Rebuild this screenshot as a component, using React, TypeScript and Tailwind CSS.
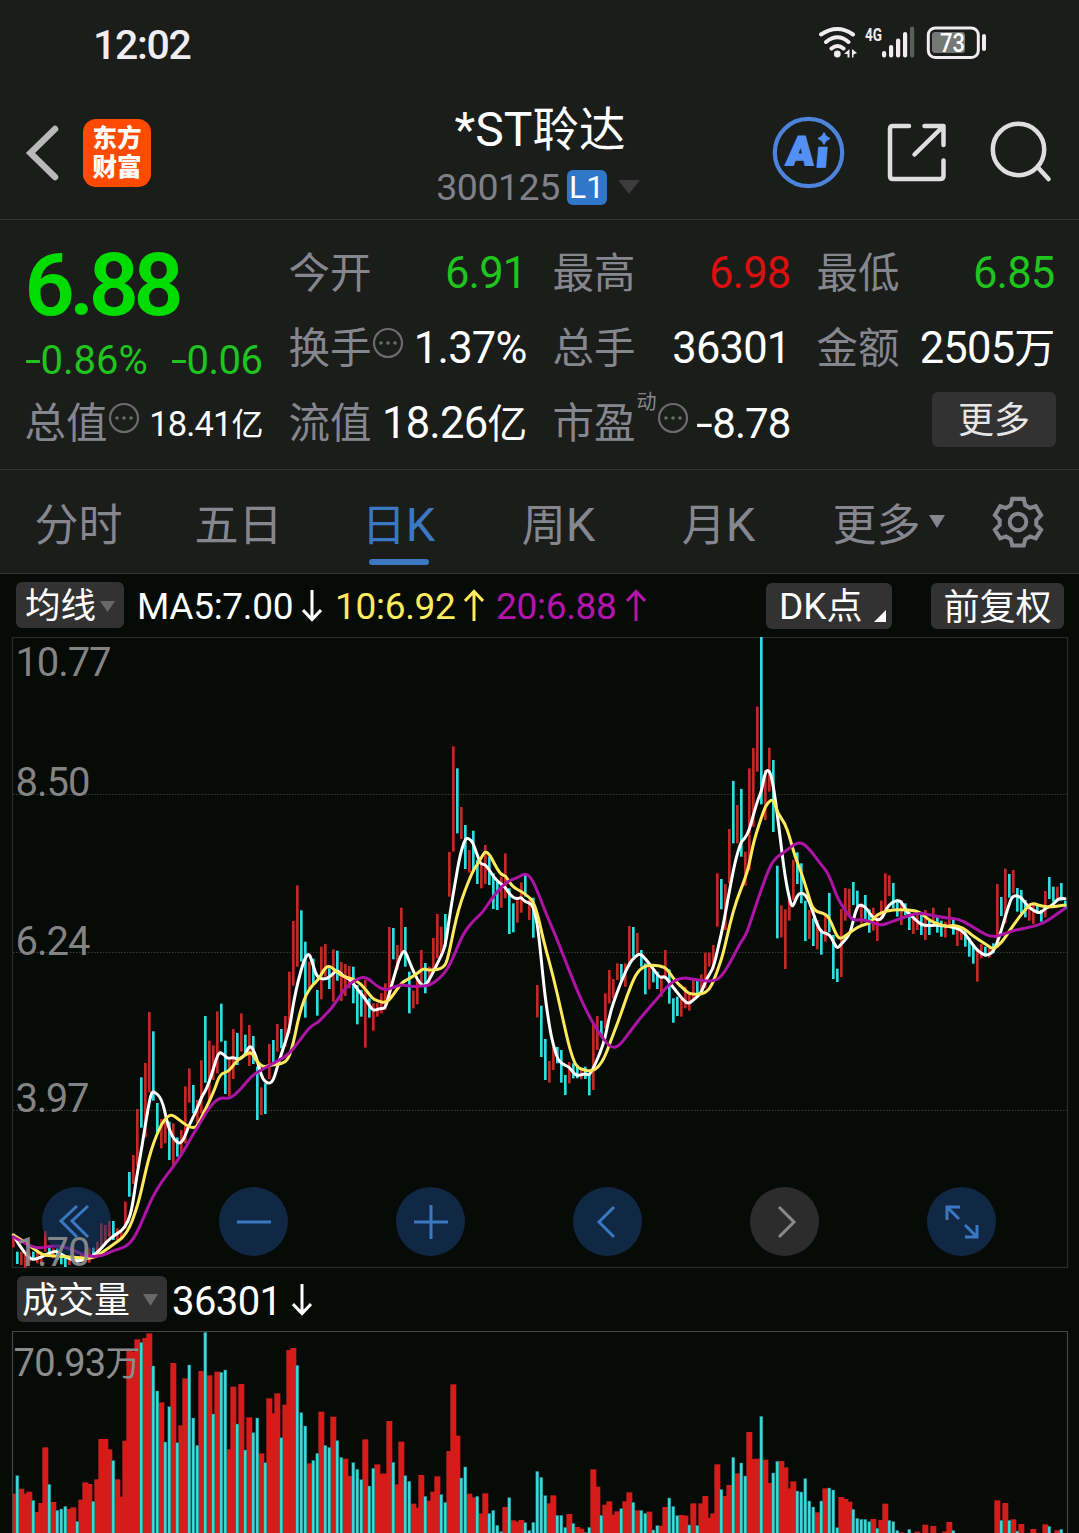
import type { ReactNode } from 'react'
import clsx from 'clsx'

// Chart space is 3 units per pixel, one bar every 12 units
const STEP = 12
const FIRST = 40

// [direction, high, low] per day, split where the vertical origin changes
const CANDLES: Array<{ dy: number; rows: string }> = [
  {
    dy: 669,
    rows: `r1125-1162 c1175-1212 r1175-1215 r1185-1223 r1175-1205 c1175-1200 r1170-1210 r1175-1212 r1113-1175 c1155-1185
    r1165-1195 c1165-1200 c1180-1213 c1190-1221 r1190-1215 r1185-1205 c1190-1210 r1180-1205 r1170-1200 r1165-1208
    c1163-1192 r1145-1185 r1090-1160 r1095-1155 r1083-1130 c1083-1140 r1105-1140 r1115-1140 r1025-1105 c936-1010
    r885-972 r747-920 c652-803 r609-833 r456-697 c514-722 c729-822 r777-865 r780-850 c785-900
    r790-920 c832-890 r810-885 r679-850 r625-728 c675-760 r720-790 r601-760 c468-668 r542-720
    r556-660 r454-640 c431-545 c542-702 r600-708 r507-657 c519-615 r460-575 c524-580 r495-618
    c528-612 c620-780 r682-765 c670-762 r552-657 c540-607 r492-575 c507-565 r468-560 r335-520
    r183-377 r76-320 c151-305 c245-473 r305-390 c296-372 c390-467 r260-418 r252-350 c325-387
    r268-425 c272-362 r306-423 r312-408 r318-385 c320-430 c375-493`,
  },
  {
    dy: 249,
    rows: `c810-890 r780-983 c835-893 r850-932 r850-890 r820-880 r790-870 r621-830 c624-718 r675-750
    r563-700 c621-740 c755-880 r812-865 r780-853 r690-800 c729-820 r740-790 r654-760 r582-715
    r620-710 c582-680 r396-530 r79-395 c145-340 r261-357 c315-447 r390-458 c332-455 c420-492
    r430-505 r375-492 c410-495 c460-567 c480-570 r470-563 r400-535 c505-642 c550-637 r530-608
    r487-578 c460-530 r540-600 c533-653 r795-892 c857-1011 c957-1080 r1023-1088 r980-1050 c981-1030
    c990-1088 c1065-1125 r1026-1090 c1030-1075 c1035-1075 r1045-1078 c1040-1077 c1065-1126 r910-1110 r888-990
    c902-950 r820-925 r750-850 r777-835 r730-780 c732-785 r730-800 r618-740 c621-710 r639-700
    c690-740 c730-823 r740-808 c750-787 c755-807 r765-830 r690-770 c748-851 c835-908 c830-888
    r835-890 r800-865 r820-872`,
  },
  {
    dy: -21,
    rows: `r1045-1110 c1052-1100 r1033-1095 r968-1075 r968-1010 r945-1020 r730-890 c747-838 r762-900 r597-760
    c453-640 r525-640 c477-680 r665-767 r415-720 r354-590 r230-425 c21-523 r420-570 r353-485
    c390-606 c707-925 r826-922 r838-1017 r810-872 r690-810 c667-762 c700-820 c812-933 r840-927
    c865-948 r870-958 c905-974 r855-935 c789-907 c915-1047 c1016-1056 r837-1041 r774-872 r776-860
    c756-825 c782-830 r820-880 c795-872 c838-908 r833-902 r850-933 r812-860 r730-840 r736-798
    c759-835 c808-860 r810-885 c820-855 c845-900 r865-912 r850-900 c855-915 r840-930 c870-915
    r833-885 c860-908 c872-920 r875-923 r833-890 c870-914 r885-948 r890-930 c900-950 c925-980
    c945-1001 r960-1055 r942-985 c950-980 r955-983 c940-970 r762-950 c801-858 r716-880 c732-803
    r720-790 c774-845 c780-850 c810-862 r820-872 r820-882 c825-850 c840-875 r783-862 c741-807
    c770-815 r770-810 c759-812 c812-838`,
  },
]

// top of each volume bar, "-" is a day below the visible part
const VOLUMES: Array<{ dy: number; rows: string }> = [
  {
    dy: -183,
    rows: `r671 c617 r656 r671 r665 c691 r726 r699 r532 c643 r696 c721 c717 c709 r717 r712 c754 r689 r637 r642
    c694 r628 r507 r507 r538 c572 r628 r680 r512 r240 r245 r208 c217 r204 r190 c288 c363 r397 c516 c410
    r279 c518 r466 r325 c285 c444 c526 r303 c187 r316 c432 r305 c307 c300 r538 r350 c462 r342 c540 r442
    c488 c444 r550 c578 r385 r430 r370 c503 r404 r240 r234 c286 c428 c468 r580 c571 c550 r425 c526 c532
    r440 c512 c562 r566 r618 c578 c598`,
  },
  {
    dy: 117,
    rows: `c329 r208 c348 c295 r283 r311 r311 r153 c277 r343 r215 c317 c334 r401 r413 r315 c379 r392 r365 r319
    c374 c397 r243 r43 r197 c324 c291 r371 r382 c379 r430 r370 c430 c421 c466 c485 r411 c383 r451 r455
    r450 c458 c482 c457 c304 c322 c377 r400 r376 c436 c436 c472 r432 c460 r471 r476 c487 c472 r298 r350
    c436 r404 r394 r434 r424 c416 r394 r367 c397 r421 c421 c430 r425 c480 c467 r467 r411 c384 c409 c437
    r435 r437 c465 r400 c466 r400 r378 r443 r430 r283 c358 r378 r345 c262 r310 c279 c318 r186 r267 r266
    c139 r269 r339 c309 c274 r273 r292 r355 r334 c363 c366 c326 c393 c411 r427 c393 r355 c354 c360 c473
    r381 r387 r395 c418 c445 c448 c448 c455 r447 c475 r450 r401 c451 c455 c481 r487 - c478 - r485
    - r464 - r468 - - r484 r456 c481 - - - - - - - - - - r391
    c451 r399 c451 r448 c483 r462 - - r477 - - r463 c469 - r481 c478 -`,
  },
]

type Trace = Array<{ dx: number; dy: number; points: string }>

const MA5: Trace = [
  {
    dx: 0,
    dy: 669,
    points: `40,1125 60,1160 90,1197 108,1198 130,1188 150,1178 170,1173 190,1186 212,1198 236,1204 256,1196 275,1190 295,1175 320,1145
    345,1124 365,1113 385,1085 397,1040 410,950 425,865 440,770 452,705 460,692 485,715 500,780 510,815 525,842 540,852 553,835
    565,800 588,755 605,710 618,690 635,645 652,585 662,576 675,588 685,596 700,592 718,600 735,585 748,557 758,565 770,595
    785,650 795,665 808,671 820,662 832,620 848,570 868,510 880,430 895,360 912,300 926,278 935,300 948,345 962,358 985,355
    1012,328 1030,350 1052,358`,
  },
  {
    dx: 1020,
    dy: 249,
    points: `55,812 75,835 95,868 105,871 120,865 136,866 148,820 165,760 180,710 194,688 208,725 225,765 240,790 252,798 265,785
    280,755 300,715 316,680 330,580 345,490 360,405 375,357 385,354 398,366 410,400 422,433 435,433 448,450 460,470 480,490
    495,500 510,525 525,535 535,536 543,532 555,545 568,548 580,560 592,610 602,700 615,830 630,930 640,975 652,1015 665,1032
    688,1040 700,1060 715,1068 735,1060 748,1067 762,1040 780,1000 795,955 810,880 830,820 850,770 868,730 885,710 900,700
    915,715 935,740 960,775 975,768 990,790 1010,815 1030,840 1045,852 1060,840`,
  },
  {
    dx: 2070,
    dy: -21,
    points: `25,1097 35,1085 50,1045 70,1015 85,950 100,885 115,800 135,695 153,635 165,625 178,600 190,555 205,505 214,485 225,428
    235,418 245,440 258,520 270,620 285,740 300,815 308,833 320,800 330,788 345,792 358,815 370,850 382,885 395,908 418,912
    430,935 442,957 455,940 470,925 482,905 495,850 505,825 518,826 530,835 545,860 565,872 578,862 590,835 605,817 628,810
    640,825 652,848 670,862 685,878 705,888 740,885 778,890 805,895 825,910 845,940 865,965 890,978 910,965 925,930 940,880
    955,830 968,795 992,800 1010,825 1030,842 1052,850 1065,835 1085,828 1105,805 1125,806`,
  },
]

const MA10: Trace = [
  {
    dx: 0,
    dy: 669,
    points: `40,1125 65,1140 85,1155 105,1168 125,1184 150,1187 200,1190 240,1194 280,1195 310,1175 345,1150 370,1132 390,1100
    405,1060 420,1010 440,920 455,865 470,825 485,792 500,772 515,763 535,777 560,797 580,804 592,798 610,760 630,720 645,685
    660,642 685,635 700,615 715,598 735,585 755,575 770,605 790,622 810,615 845,612 865,598 880,550 892,490 905,440 920,400
    938,375 955,360 972,328 985,317 1000,325 1020,345 1045,353`,
  },
  {
    dx: 1020,
    dy: 249,
    points: `40,778 60,790 80,812 95,833 110,842 138,850 160,825 185,787 210,775 235,758 250,745 270,752 312,745 325,710 340,635
    355,570 375,510 400,450 415,430 428,405 437,394 450,405 465,435 482,463 498,468 510,490 525,505 545,515 565,530 580,545
    595,590 610,660 640,770 665,880 685,970 700,1020 712,1042 730,1050 755,1054 775,1042 795,1010 815,955 840,890 860,830
    880,780 895,752 912,740 935,734 975,741 990,760 1010,788 1030,805 1045,820`,
  },
  {
    dx: 2070,
    dy: -21,
    points: `10,1092 25,1093 45,1090 62,1072 80,1030 100,970 120,880 140,810 160,760 175,715 190,640 205,590 220,545 232,518 250,506
    262,548 285,580 300,625 315,680 335,730 355,795 370,843 410,852 425,880 440,918 452,927 470,915 490,900 515,885 540,880
    558,855 590,842 630,838 680,842 700,855 720,872 745,882 770,890 790,885 820,893 845,915 870,932 895,948 910,958 935,938
    960,900 985,865 1005,840 1025,818 1045,826 1075,832 1125,825`,
  },
]

const MA20: Trace = [
  {
    dx: 0,
    dy: 669,
    points: `40,1130 70,1148 115,1167 160,1156 200,1162 240,1180 270,1190 305,1188 340,1172 370,1163 390,1150 410,1120 430,1075
    455,1015 485,965 520,920 550,875 575,830 600,790 620,755 640,728 662,712 690,717 720,690 755,648 780,632 820,610 865,585
    900,540 930,500 955,487 970,470 995,445 1025,400 1045,375 1060,364`,
  },
  {
    dx: 1020,
    dy: 249,
    points: `60,773 75,772 90,780 110,798 135,811 160,802 185,793 215,800 260,798 280,790 318,757 345,700 370,640 400,602 428,578
    455,535 485,500 505,483 535,472 556,459 575,475 595,520 620,585 650,655 685,745 715,820 745,885 775,935 800,970 820,985
    840,975 870,935 900,895 935,855 965,820 985,795 1010,778 1035,773`,
  },
  {
    dx: 2070,
    dy: -21,
    points: `0,1046 20,1049 40,1052 70,1054 95,1040 125,990 150,940 168,915 190,850 220,760 248,690 285,665 310,645 325,638 342,642
    365,665 390,700 408,720 425,755 442,805 465,840 488,872 515,868 540,875 572,887 600,877 640,862 685,848 720,855 760,863
    805,866 840,885 870,905 905,922 940,913 975,900 1020,892 1060,880 1090,860 1125,835`,
  },
]

const candles = CANDLES.flatMap(({ dy, rows }) =>
  rows.trim().split(/\s+/).map(r => {
    const [high, low] = r.slice(1).split('-').map(Number)
    return { up: r[0] === 'r', high: high + dy, low: low + dy }
  }),
)

const volumes = VOLUMES.flatMap(({ dy, rows }) =>
  rows.trim().split(/\s+/).map(r => ({ up: r[0] === 'r', top: r === '-' ? 620 : Number(r.slice(1)) + dy })),
)

// rounds the corners by running quadratics through the midpoints
function toPath(trace: Trace) {
  const pts = trace.flatMap(({ dx, dy, points }) =>
    points.trim().split(/\s+/).map(p => {
      const [x, y] = p.split(',').map(Number)
      return [x + dx, y + dy]
    }),
  )
  let d = `M${pts[0][0]} ${pts[0][1]}`
  for (let i = 1; i < pts.length - 1; i++) {
    const mx = (pts[i][0] + pts[i + 1][0]) / 2
    const my = (pts[i][1] + pts[i + 1][1]) / 2
    d += `Q${pts[i][0]} ${pts[i][1]} ${mx} ${my}`
  }
  const last = pts[pts.length - 1]
  return `${d}L${last[0]} ${last[1]}`
}

const barX = (i: number) => FIRST + STEP * i

function StatusBar() {
  return (
    <div className="flex h-[88px] items-center pr-[91px] pl-[93px] text-[#f0ecf0]">
      <span className="mt-[2px] text-[41px] leading-none font-medium tracking-[-1.3px]">12:02</span>
      <svg className="-mt-[3px] ml-auto" width="170" height="36" viewBox="818 25 170 36" fill="none">
        <g stroke="#f0ecf0" strokeWidth="4" strokeLinecap="round">
          <path d="M821 34.5Q837.500 23.500 853 34.500M826 42Q837.500 32.500 848.500 42M831.500 48.500Q837.500 43.500 843.500 48.500" />
        </g>
        <circle cx="837.300" cy="54" r="3.400" fill="#f0ecf0" />
        <path d="M849.500 49v8.500h-2v-3.500h-3.500zM852 49v8.500h1.500v-3l3.500-1.500z" fill="#f0ecf0" />
        <text x="865" y="41" fontSize="19" fontWeight="700" fill="#f0ecf0" textLength="17" lengthAdjust="spacingAndGlyphs">4G</text>
        <g fill="#f0ecf0">
          <rect x="882" y="51" width="4.200" height="6.500" rx="2" />
          <rect x="889" y="45" width="4.200" height="12.500" rx="2" />
          <rect x="896" y="38.500" width="4.200" height="19" rx="2" />
          <rect x="903" y="32" width="4.200" height="25.500" rx="2" />
          <rect x="910" y="26.500" width="4.200" height="31" rx="2" fill="#5c5e5c" />
          <rect x="982" y="34" width="4" height="17" rx="2" />
        </g>
        <rect x="928.300" y="28" width="50" height="29.500" rx="7" stroke="#f0ecf0" strokeWidth="3" />
        <rect x="932" y="32" width="33" height="21" rx="3" fill="#767876" />
        <text x="940" y="51.500" fontSize="25" fontWeight="500" fill="#fff" textLength="25" lengthAdjust="spacingAndGlyphs">73</text>
      </svg>
    </div>
  )
}

function Header() {
  return (
    <header className="flex h-[132px] border-b border-[#343534] pr-[27px] pl-[24px]">
      <div className="flex w-[340px] items-center gap-[22px]">
        <svg className="-mt-[2px]" width="37" height="60" viewBox="0 0 37 60" fill="none" stroke="#b9b9b9" strokeWidth="6.500">
          <path d="M31 6L6.500 30L31 54" strokeLinecap="round" />
        </svg>
        <div className="-mt-[2px] flex h-[68px] w-[68px] flex-col items-center justify-center rounded-[13px] bg-[#ff4a00] text-[24.500px] leading-[29px] font-black text-white">
          <span>东方</span>
          <span>财富</span>
        </div>
      </div>
      <div className="flex w-[350px] flex-col items-center pt-[18px]">
        <h1 className="ml-[2px] text-[48px] leading-[48px] text-white">
          *ST<span className="text-[46.500px]">聆达</span>
        </h1>
        <div className="mt-[13px] -ml-[2px] flex items-center">
          <span className="text-[37.500px] leading-[40px] tracking-[-0.500px] text-[#7f8088]">300125</span>
          <span className="ml-[7px] flex h-[35px] w-[40px] items-center justify-center rounded-[6px] bg-[#3077c8] text-[32px] leading-none text-white">
            L1
          </span>
          <Caret className="ml-[11px] h-[14px] w-[22px] text-[#3c3c3c]" />
        </div>
      </div>
      <svg className="mt-[25px] ml-auto" width="282" height="76" viewBox="770 113 282 76" fill="none">
        <circle cx="808.500" cy="152.500" r="33.700" stroke="#4c84dc" strokeWidth="4.200" />
        <g fill="#5490f4" stroke="#5490f4" fontWeight="900" transform="translate(808 152) skewX(-5) translate(-808 -152)">
          <text x="787" y="165" fontSize="40" strokeWidth="2" textLength="27" lengthAdjust="spacingAndGlyphs">A</text>
          <text x="816" y="167" fontSize="37" strokeWidth="1.500" textLength="13" lengthAdjust="spacingAndGlyphs">ı</text>
        </g>
        <path d="M824 132.500Q825.500 137 830 138.500Q825.500 140 824 144.500Q822.500 140 818 138.500Q822.500 137 824 132.500Z" fill="#5490f4" stroke="#5490f4" />
        <g stroke="#dedede" strokeWidth="4.500" strokeLinecap="round" strokeLinejoin="round">
          <path d="M909 126H893Q890 126 890 129V176Q890 179 893 179H940Q943.500 179 943.500 176V160.500M924.500 126H943.500V145M943 126.500L914.500 154.500" />
          <circle cx="1018.500" cy="149.500" r="25.700" />
          <path d="M1038 167.500L1048.500 179" />
        </g>
      </svg>
    </header>
  )
}

function Caret({ className }: { className: string }) {
  return (
    <svg className={className} viewBox="0 0 16 12" preserveAspectRatio="none">
      <path d="M0 0H16L8 12Z" fill="currentColor" />
    </svg>
  )
}

function InfoDot() {
  return (
    <svg className="-mt-[8px] shrink-0" width="32" height="32" viewBox="0 0 32 32" fill="#6b6b6b">
      <circle cx="16" cy="16" r="14" fill="none" stroke="#6b6b6b" strokeWidth="2.200" />
      <circle cx="9" cy="16" r="1.800" />
      <circle cx="16" cy="16" r="1.800" />
      <circle cx="23" cy="16" r="1.800" />
    </svg>
  )
}

// wide minus sign used in front of negative numbers
function Minus() {
  return <span className="mr-[5px] inline-block origin-left scale-x-[1.450]">-</span>
}

type FieldProps = { label: string; extra?: ReactNode; children: ReactNode; color?: string; size?: string }

function Field({ label, extra, children, color = 'text-white', size = 'text-[43.500px] tracking-[-0.800px]' }: FieldProps) {
  return (
    <div className="flex h-[75px] items-center whitespace-nowrap">
      <span className="mt-[4px] text-[41.500px] leading-none text-[#86868e]">{label}</span>
      {extra}
      <span className={clsx('mt-[5px] ml-auto leading-none', size, color)}>{children}</span>
    </div>
  )
}

function Quote() {
  return (
    <section className="flex h-[250px] gap-[26px] border-b border-[#343534] pt-[14px] pl-[24.500px]">
      <div className="w-[238px]">
        <div className="flex h-[99px] items-center pt-[3px] text-[88px] leading-none font-semibold tracking-[-5.500px] text-[#00dc00]">6.88</div>
        <div className="flex h-[51px] items-center justify-between pt-[4px] text-[40px] leading-none text-[#1fc41f]">
          <span>
            <Minus />
            0.86%
          </span>
          <span className="tracking-[-0.500px]">
            <Minus />
            0.06
          </span>
        </div>
        <Field label="总值" extra={<InfoDot />} size="text-[34.500px] tracking-[-0.900px]">
          18.41<span className="text-[32px]">亿</span>
        </Field>
      </div>
      <div className="w-[238px]">
        <Field label="今开" color="text-[#1fc41f]">6.91</Field>
        <Field label="换手" extra={<InfoDot />}>1.37%</Field>
        <Field label="流值">
          18.26<span className="text-[40px]">亿</span>
        </Field>
      </div>
      <div className="w-[238px]">
        <Field label="最高" color="text-[#dc0f0f]">6.98</Field>
        <Field label="总手">36301</Field>
        <Field
          label="市盈"
          extra={
            <>
              <span className="mb-[39px] ml-px text-[20px] leading-none text-[#86868e]">动</span>
              <InfoDot />
            </>
          }
          size="text-[42px] tracking-[-0.900px]"
        >
          <Minus />
          8.78
        </Field>
      </div>
      <div className="w-[238px]">
        <Field label="最低" color="text-[#1fc41f]">6.85</Field>
        <Field label="金额">
          2505<span className="text-[41px]">万</span>
        </Field>
        <button className="mt-[8px] -mr-[1.500px] ml-auto flex h-[55px] w-[124px] items-center justify-center rounded-[6px] bg-[#323232] pt-[2px] text-[36px] leading-none text-[#e6e6e6]">
          更多
        </button>
      </div>
    </section>
  )
}

const TABS = ['分时', '五日', '日K', '周K', '月K']

function Tabs() {
  return (
    <nav className="flex h-[104px] border-b border-[#343534] text-[44px] leading-none text-[#86868e]">
      <div className="-ml-[1.500px] flex">
        {TABS.map(t => (
          <button key={t} className={clsx('flex w-[160px] flex-col items-center pt-[34px]', t === '日K' && 'text-[#3a78c2]')}>
            <span className="h-[44px]">
              {t.replace('K', '')}
              {t.endsWith('K') && <span className="text-[47px] leading-[0]">K</span>}
            </span>
            {t === '日K' && <span className="mt-[11px] h-[6px] w-[60px] rounded-full bg-[#3a78c2]" />}
          </button>
        ))}
      </div>
      <button className="ml-[34px] flex items-start gap-[8px] pt-[34px]">
        更多
        <Caret className="mt-[11px] h-[13px] w-[16px]" />
      </button>
      <svg className="mt-[25.500px] ml-[47px]" width="52" height="52" viewBox="-27 -27 54 54" fill="none" stroke="#86868e" strokeWidth="4.200">
        <path d="M-6-24H6L7.500-17.500L12.500-14.500L18.500-16.500L24-7L19-2V3L24 8L18.500 17L12.500 15L7.500 18L6 24.500H-6L-7.500 18L-12.500 15L-18.500 17L-24 8L-19 3V-2L-24-7L-18.500-16.500L-12.500-14.500L-7.500-17.500Z" />
        <circle r="8.600" />
      </svg>
    </nav>
  )
}

function Arrow({ up, className }: { up?: boolean; className?: string }) {
  return (
    <svg className={className} width="20" height="33" viewBox="0 0 20 33" fill="none" stroke="currentColor" strokeWidth="3">
      <path d={up ? 'M10 32V3M1 12L10 2.500L19 12' : 'M10 1V30M1 21L10 30.500L19 21'} />
    </svg>
  )
}

function Averages() {
  return (
    <div className="flex h-[63px] items-center pr-[15px] pl-[16px] text-[37px] leading-none whitespace-nowrap text-white">
      <button className="-mt-px flex h-[46px] w-[108px] items-center rounded-[6px] bg-[#323232] pt-[4px] pl-[9px] text-[35.500px]">
        均线
        <Caret className="-mt-[2px] ml-[4px] h-[11px] w-[15px] text-[#686868]" />
      </button>
      <span className="ml-[13px] flex w-[198px] items-center justify-between pr-[13px]">
        <span className="mt-[2px] tracking-[-0.300px]">MA5:7.00</span> <Arrow />
      </span>
      <span className="flex w-[161px] items-center justify-between pr-[12px] text-[#ffeb5e]">
        <span className="mt-[2px] tracking-[-0.300px]">10:6.92</span> <Arrow up />
      </span>
      <span className="flex w-[150px] items-center justify-between text-[#b414ac]">
        <span className="mt-[2px] tracking-[-0.300px]">20:6.88</span> <Arrow up />
      </span>
      <button className="ml-auto flex h-[46px] w-[126px] items-center rounded-[6px] bg-[#323232] pt-[2px] pl-[13px]">
        DK<span className="text-[36px]">点</span>
        <svg className="mt-[19px] ml-[11px]" width="12" height="12" viewBox="0 0 13 13" fill="#fff">
          <path d="M13 0V13H0Z" />
        </svg>
      </button>
      <button className="ml-[39px] flex h-[46px] w-[133px] items-center justify-center rounded-[6px] bg-[#323232] pt-[4px] text-[36px]">前复权</button>
    </div>
  )
}

const LEVELS = [
  { y: 676, label: '10.77', width: 96 },
  { y: 796, label: '8.50', width: 75 },
  { y: 954.5, label: '6.24', width: 75 },
  { y: 1111.5, label: '3.97', width: 74 },
  { y: 1265.5, label: '1.70', width: 75 },
]

const CONTROLS: Array<{ id: string; icon: ReactNode; muted?: boolean }> = [
  { id: 'first', icon: <path d="M0-16L-16-1L0 15M11-16L-5-1L11 15" /> },
  { id: 'out', icon: <path d="M-17 0H17" /> },
  { id: 'in', icon: <path d="M-17 0H17M0-17V17" /> },
  { id: 'prev', icon: <path d="M6-15L-9 0L6 15" /> },
  { id: 'next', icon: <path d="M-6-15L9 0L-6 15" />, muted: true },
  { id: 'full', icon: <path d="M-2-15H-15V-2M-15-15L-3-3M3 15H15V3M15 15L3 3" /> },
]

function PriceChart() {
  return (
    <div className="relative h-[631px]">
      <svg className="block" width="1079" height="631" viewBox="0 637 1079 631" fill="none">
        <rect x="12.500" y="637.500" width="1055" height="630" stroke="#2a2a2a" strokeWidth="1.300" />
        <g stroke="#3a3a3a" strokeWidth="1" strokeDasharray="1.500 1.500">
          <path d="M13 794.500H1067M13 952.500H1067M13 1110.500H1067" />
        </g>
        <g transform="translate(0 637) scale(0.333333)" strokeLinejoin="round" strokeLinecap="round">
          {candles.map((c, i) => (
            <rect key={i} x={barX(i) - 4} y={c.high} width="8" height={c.low - c.high} fill={c.up ? '#c42824' : '#2fdce0'} />
          ))}
          <path d={toPath(MA5)} stroke="#fff" strokeWidth="9" />
          <path d={toPath(MA10)} stroke="#ffe95c" strokeWidth="9" />
          <path d={toPath(MA20)} stroke="#ad14a6" strokeWidth="9" />
        </g>
      </svg>
      <div className="absolute top-[550px] left-[42px] flex gap-[108px]">
        {CONTROLS.map(({ id, icon, muted }) => (
          <button
            key={id}
            className={clsx(
              'flex size-[69px] items-center justify-center rounded-full',
              muted ? 'bg-[#303030]/90 text-[#8a8a8a]' : 'bg-[#1a4275]/55 text-[#3a78c2]',
            )}
          >
            <svg width="44" height="44" viewBox="-22 -22 44 44" fill="none" stroke="currentColor" strokeWidth="3">
              {icon}
            </svg>
          </button>
        ))}
      </div>
      <svg className="pointer-events-none absolute top-0 left-0" width="140" height="650" viewBox="0 637 140 650">
        {LEVELS.map(l => (
          <text key={l.label} x="15.500" y={l.y} fontSize="40" fill="#8c8c8c" fillOpacity="0.950" textLength={l.width}>
            {l.label}
          </text>
        ))}
      </svg>
    </div>
  )
}

function VolumeChart() {
  const rising = volumes.map((v, i) => ({ ...v, i })).filter(v => v.up)
  const falling = volumes.map((v, i) => ({ ...v, i })).filter(v => !v.up && v.top < 610)

  return (
    <svg className="block" width="1079" height="202" viewBox="0 1331 1079 202" fill="none">
      <g transform="translate(0 1331) scale(0.333333)">
        {rising.map(v => (
          <rect key={v.i} x={Math.max(barX(v.i) - 9, 38)} y={v.top} width="18" height={620 - v.top} fill="#d41c19" />
        ))}
        {falling.map(v => (
          <rect key={v.i} x={barX(v.i) - 4.5} y={v.top} width="9" height={620 - v.top} fill="#36dfe0" stroke="#2b6668" strokeWidth="1.500" />
        ))}
      </g>
      <path d="M12.500 1540V1331.500H1067.500V1540" stroke="#464646" strokeWidth="1.200" />
      <text x="13.500" y="1375.500" fontSize="38" fill="#8c8c8c" textLength="127">
        70.93<tspan fontSize="35">万</tspan>
      </text>
    </svg>
  )
}

export default function App() {
  return (
    <div className="h-[1533px] w-[1079px] overflow-hidden bg-[#060b07] font-[Roboto,'Noto_Sans_CJK_SC',sans-serif]">
      <div className="bg-[#1a1d1a]">
        <StatusBar />
        <Header />
        <Quote />
        <Tabs />
      </div>
      <Averages />
      <PriceChart />
      <div className="flex h-[63px] items-center pl-[17px] text-[40px] leading-none text-white">
        <button className="-mt-px flex h-[46px] w-[150px] items-center rounded-[6px] bg-[#323232] pt-[4px] pl-[5px] text-[36px]">
          成交量
          <Caret className="-mt-[2px] ml-[13px] h-[12px] w-[15px] text-[#686868]" />
        </button>
        <span className="mt-[4px] ml-[5px] tracking-[-0.600px]">36301</span>
        <Arrow className="ml-[11px]" />
      </div>
      <VolumeChart />
    </div>
  )
}
